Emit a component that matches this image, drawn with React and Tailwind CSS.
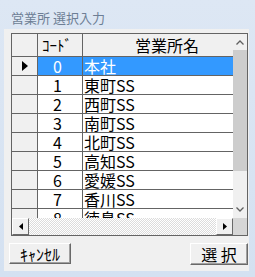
const rows = [
  { code: "0", name: "本社" },
  { code: "1", name: "東町SS" },
  { code: "2", name: "西町SS" },
  { code: "3", name: "南町SS" },
  { code: "4", name: "北町SS" },
  { code: "5", name: "高知SS" },
  { code: "6", name: "愛媛SS" },
  { code: "7", name: "香川SS" },
  { code: "8", name: "徳島SS" },
];

const ArrowBox = ({ dir }) => (
  <div className="w-[17px] h-[17px] flex items-center justify-center bg-[#f0f0f0] border border-t-white border-l-white border-r-[#696969] border-b-[#696969]">
    <svg width="4" height="7" viewBox="0 0 4 7">
      {dir === "left" ? <path d="M4 0 L0 3.5 L4 7 Z" fill="#000" /> : <path d="M0 0 L4 3.5 L0 7 Z" fill="#000" />}
    </svg>
  </div>
);

const Chevron = ({ up }) => (
  <svg width="8" height="5" viewBox="0 0 8 5">
    <path d={up ? "M0.5 4.5 L4 1 L7.5 4.5" : "M0.5 0.5 L4 4 L7.5 0.5"} stroke="#606060" strokeWidth="1.3" fill="none" />
  </svg>
);

const App = () => {
  return (
    <div
      className="w-[255px] h-[277px] overflow-hidden bg-gradient-to-b from-[#dde7f4] to-[#d4e1f1]"
      style={{ fontFamily: '"Noto Sans CJK JP", "Liberation Sans", sans-serif' }}
    >
      {/* title bar */}
      <div className="h-[29px] pl-[11px] pt-[11px] text-[13px] leading-[14px] text-[#6d7e95]">
        営業所 選択入力
      </div>

      {/* client */}
      <div className="ml-[4px] w-[245px] h-[242px] bg-[#f0f0f0] pt-[4px]">
        <div className="ml-[7px] w-[237px] h-[203px] border border-[#646464] flex">
          <div className="w-[221px] flex flex-col">
            {/* header */}
            <div className="h-[23px] flex border-b border-[#646464] bg-[#f0f0f0] text-black">
              <div className="w-[26px] border-r border-[#646464]" />
              <div className="w-[45px] border-r border-[#646464] pl-[4px] text-[15px] leading-[22px]">ｺｰﾄﾞ</div>
              <div className="flex-1 pl-[52px] text-[16px] leading-[22px]">営業所名</div>
            </div>

            {/* body */}
            <div className="h-[161px] overflow-hidden">
              {rows.map((row, i) => {
                const selected = i === 0;
                return (
                  <div key={i} className="h-[19px] flex border-b border-[#646464]">
                    <div className="w-[26px] border-r border-[#646464] bg-[#f0f0f0] flex items-center justify-center">
                      {selected && (
                        <svg width="6" height="10" viewBox="0 0 6 10">
                          <path d="M0 0 L6 5 L0 10 Z" fill="#000" />
                        </svg>
                      )}
                    </div>
                    <div
                      className={`w-[45px] border-r border-[#646464] text-center pr-[5px] text-[16px] leading-[18px] ${
                        selected ? "bg-[#3399ff] text-white" : "bg-white text-black"
                      }`}
                    >
                      {row.code}
                    </div>
                    <div
                      className={`flex-1 pl-[1px] text-[16px] leading-[18px] ${
                        selected ? "bg-[#3399ff] text-white" : "bg-white text-black"
                      }`}
                    >
                      {row.name}
                    </div>
                  </div>
                );
              })}
            </div>

            {/* horizontal scrollbar */}
            <div className="h-[17px] flex">
              <ArrowBox dir="left" />
              <div className="flex-1 bg-[repeating-conic-gradient(#ffffff_0%_25%,#dcdcdc_0%_50%)] bg-size-[2px_2px]" />
              <ArrowBox dir="right" />
            </div>
          </div>

          {/* vertical scrollbar */}
          <div className="w-[14px] flex flex-col">
            <div className="h-[16px] bg-[#f0f0f0] flex items-center justify-center">
              <Chevron up />
            </div>
            <div className="h-[121px] bg-[#cdcdcd]" />
            <div className="flex-1 bg-[#f0f0f0]" />
            <div className="h-[17px] bg-[#f0f0f0] flex items-center justify-center">
              <Chevron />
            </div>
            <div className="h-[17px] bg-[#d6d6d6]" />
          </div>
        </div>

        {/* buttons */}
        <div className="mt-[7px] flex justify-between pl-[5px] pr-[1px]">
          <button className="w-[62px] h-[21px] bg-[#f0f0f0] border border-t-white border-l-white border-r-[#696969] border-b-[#696969] shadow-[inset_-1px_-1px_0_#a0a0a0] text-[16px] leading-[18px] text-black">
            ｷｬﾝｾﾙ
          </button>
          <button className="w-[58px] h-[22px] bg-[#f0f0f0] border border-t-white border-l-white border-r-[#696969] border-b-[#696969] shadow-[inset_-1px_-1px_0_#a0a0a0] text-[16px] leading-[18px] text-black">
            選 択
          </button>
        </div>
      </div>
    </div>
  );
};

export default App;
